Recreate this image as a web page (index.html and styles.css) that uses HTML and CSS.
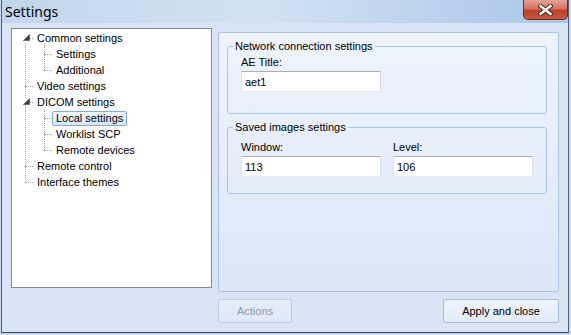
FILE: index.html
```html
<!DOCTYPE html>
<html lang="en">

<head>
    <meta charset="UTF-8">
    <meta name="viewport" content="width=device-width, initial-scale=1.0">
    <title>Settings</title>
    <link rel="stylesheet" href="styles.css">
</head>

<body>
    <div class="window">
        <div class="titlebar">
            <span class="title">Settings</span>
            <button class="close-btn" title="Close">
                <svg width="15" height="12" viewBox="0 0 15 12">
                    <path d="M2.5 2 L12.5 10 M12.5 2 L2.5 10" stroke="#4a2a26" stroke-width="4.6" stroke-linecap="square" fill="none"/>
                    <path d="M2.5 2 L12.5 10 M12.5 2 L2.5 10" stroke="#ffffff" stroke-width="2.4" stroke-linecap="square" fill="none"/>
                </svg>
            </button>
        </div>

        <div class="client">
            <div class="tree">
                <ul class="tree-root">
                    <li>
                        <div class="row">
                            <span class="toggle"><svg width="7" height="7" viewBox="0 0 7 7"><polygon points="6.5,0.5 6.5,6.5 0.5,6.5" fill="#3c3c3c" stroke="#6f6f6f" stroke-width="1"/></svg></span>
                            <span class="item">Common settings</span>
                        </div>
                        <ul class="tree-children">
                            <li><div class="row"><span class="item">Settings</span></div></li>
                            <li><div class="row"><span class="item">Additional</span></div></li>
                        </ul>
                    </li>
                    <li><div class="row"><span class="item">Video settings</span></div></li>
                    <li>
                        <div class="row">
                            <span class="toggle"><svg width="7" height="7" viewBox="0 0 7 7"><polygon points="6.5,0.5 6.5,6.5 0.5,6.5" fill="#3c3c3c" stroke="#6f6f6f" stroke-width="1"/></svg></span>
                            <span class="item">DICOM settings</span>
                        </div>
                        <ul class="tree-children">
                            <li><div class="row"><span class="item selected">Local settings</span></div></li>
                            <li><div class="row"><span class="item">Worklist SCP</span></div></li>
                            <li><div class="row"><span class="item">Remote devices</span></div></li>
                        </ul>
                    </li>
                    <li><div class="row"><span class="item">Remote control</span></div></li>
                    <li><div class="row"><span class="item">Interface themes</span></div></li>
                </ul>
            </div>

            <div class="right-column">
                <div class="panel">
                    <fieldset class="group group-network">
                        <legend>Network connection settings</legend>
                        <div class="field">
                            <label for="ae-title">AE Title:</label>
                            <input id="ae-title" class="textbox" type="text" value="aet1">
                        </div>
                    </fieldset>

                    <fieldset class="group group-images">
                        <legend>Saved images settings</legend>
                        <div class="field-row">
                            <div class="field">
                                <label for="window-value">Window:</label>
                                <input id="window-value" class="textbox" type="text" value="113">
                            </div>
                            <div class="field">
                                <label for="level-value">Level:</label>
                                <input id="level-value" class="textbox" type="text" value="106">
                            </div>
                        </div>
                    </fieldset>
                </div>

                <div class="button-row">
                    <button class="button button-actions" disabled>Actions</button>
                    <button class="button button-apply">Apply and close</button>
                </div>
            </div>
        </div>
    </div>
</body>

</html>
```

FILE: styles.css
```css
body {
    margin: 0;
    background-color: #c9daf0;
    font-family: 'Liberation Sans', Arial, sans-serif;
    font-size: 11px;
    color: #000;
}

.window {
    width: 568px;
    height: 333px;
    margin-left: 1px;
    background-color: #d9e5f6;
    border-left: 1px solid #4f5f78;
    border-right: 1px solid #4f5f78;
    border-bottom: 1px solid #3a4658;
    box-sizing: border-box;
    display: flex;
    flex-direction: column;
}

/* title bar */
.titlebar {
    height: 23px;
    display: flex;
    align-items: flex-start;
    justify-content: space-between;
    background: linear-gradient(to right, #c1d5ec 0%, #d2e2f4 45%, #bcd3ee 75%, #a9c5e8 100%);
}

.title {
    font-family: 'Noto Sans', 'Open Sans', sans-serif;
    font-size: 14px;
    line-height: 18px;
    padding: 3px 0 0 3px;
}

.close-btn {
    width: 45px;
    height: 20px;
    margin-right: 0;
    padding: 0;
    border: 1px solid #6c2a22;
    border-top: none;
    border-radius: 0 0 5px 5px;
    background: linear-gradient(to bottom, #e3a395 0%, #d4735f 45%, #c0412b 55%, #c85a3f 100%);
    display: flex;
    align-items: center;
    justify-content: center;
}

/* client area */
.client {
    flex: 1;
    display: flex;
    gap: 6px;
    padding: 5px 3px 0 9px;
}

.tree {
    width: 201px;
    height: 260px;
    box-sizing: border-box;
    background-color: #fff;
    border: 1px solid #828790;
    padding-top: 1px;
}

.tree ul {
    list-style: none;
    margin: 0;
    padding: 0;
    position: relative;
}

.tree-root::before {
    content: '';
    position: absolute;
    left: 13px;
    top: 13px;
    bottom: 8px;
    border-left: 1px dotted #a0a0a0;
}

.tree-children::before {
    content: '';
    position: absolute;
    left: 32px;
    top: -1px;
    bottom: 8px;
    border-left: 1px dotted #a0a0a0;
}

.row {
    height: 16px;
    display: flex;
    align-items: center;
    padding-left: 21px;
    position: relative;
}

.row::before {
    content: '';
    position: absolute;
    left: 13px;
    top: 8px;
    width: 8px;
    border-top: 1px dotted #a0a0a0;
}

.tree-children .row {
    padding-left: 40px;
}

.tree-children .row::before {
    left: 32px;
}

.toggle {
    position: absolute;
    left: 11px;
    top: 4px;
    width: 7px;
    height: 7px;
    background-color: #fff;
    z-index: 1;
}

.toggle svg {
    display: block;
}

.item {
    padding: 0 3px;
    line-height: 13px;
    border: 1px solid transparent;
    border-radius: 2px;
    white-space: nowrap;
}

.item.selected {
    border-color: #84acdd;
    background: linear-gradient(to bottom, #f1f7fe, #d5e7fc);
}

/* right side */
.right-column {
    width: 341px;
    margin-top: 4px;
    display: flex;
    flex-direction: column;
}

.panel {
    height: 260px;
    box-sizing: border-box;
    border: 1px solid #a9c4e8;
    border-radius: 2px;
    background: linear-gradient(to bottom, #eef4fc 0%, #e3ecf9 60%, #dae6f7 100%);
    padding: 7px 11px 0 8px;
}

.group {
    margin: 0;
    padding: 0 0 0 13px;
    border: 1px solid #a9c4e8;
    border-radius: 3px;
    min-width: 0;
}

.group legend {
    margin-left: -8px;
    padding: 0 2px;
    line-height: 13px;
}

.group-network {
    padding-bottom: 21px;
}

.group-network .field label {
    margin-top: 3px;
}

.group-images {
    margin-top: 7px;
    padding-bottom: 16px;
}

.group-images .field label {
    margin-top: 7px;
}

.field {
    display: flex;
    flex-direction: column;
    flex-shrink: 0;
    width: 152px;
}

.field label {
    line-height: 13px;
}

.field-row {
    display: flex;
}

.textbox {
    width: 140px;
    height: 21px;
    box-sizing: border-box;
    margin: 2px 0 0 0;
    padding: 0 3px;
    font-family: 'Liberation Sans', Arial, sans-serif;
    font-size: 11px;
    color: #000;
    background-color: #fff;
    border: 1px solid;
    border-color: #abadb3 #dbdfe6 #e3e9ef #e2e3ea;
    border-radius: 1px;
    outline: none;
}

/* buttons */
.button-row {
    display: flex;
    justify-content: space-between;
    margin-top: 7px;
}

.button {
    height: 24px;
    padding: 0;
    font-family: 'Liberation Sans', Arial, sans-serif;
    font-size: 11px;
    color: #000;
    border: 1px solid #a3bcdf;
    border-radius: 2px;
    background: linear-gradient(to bottom, #eef4fc, #e2ebf9);
}

.button-actions {
    width: 74px;
    color: #8d99ab;
    border-color: #b8cce8;
    background: linear-gradient(to bottom, #e5edf9, #dfe8f7);
}

.button-apply {
    width: 116px;
}
```
